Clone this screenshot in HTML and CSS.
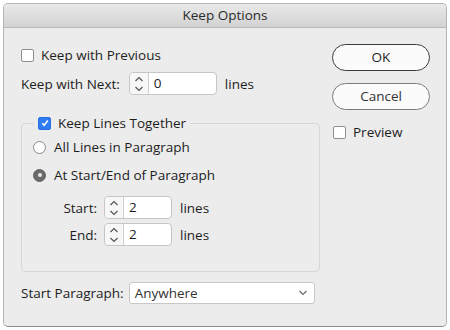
FILE: index.html
```html
<!DOCTYPE html>
<html lang="en">
<head>
    <title>Keep Options</title>
    <link rel="stylesheet" href="styles.css">
</head>
<body>
    <div class="dialog">
        <div class="titlebar">Keep Options</div>
        <div class="content">
            <div class="left">
                <label class="row first">
                    <span class="check"></span>
                    <span>Keep with Previous</span>
                </label>
                <div class="row next">
                    <span>Keep with Next:</span>
                    <span class="spinner wide">
                        <span class="arrows">
                            <svg width="10" height="18" viewBox="0 0 10 18"><path d="M1.5 6 L5 2.5 L8.5 6 M1.5 12 L5 15.5 L8.5 12" fill="none" stroke="#555" stroke-width="1.2"/></svg>
                        </span>
                        <span class="value">0</span>
                    </span>
                    <span class="unit">lines</span>
                </div>
                <fieldset class="group">
                    <legend>
                        <span class="check checked">
                            <svg width="10" height="10" viewBox="0 0 10 10"><path d="M2.2 5.2 L4.2 7.2 L7.8 2.6" fill="none" stroke="#fff" stroke-width="1.6"/></svg>
                        </span>
                        <span>Keep Lines Together</span>
                    </legend>
                    <div class="row radio-row">
                        <span class="radio"></span>
                        <span>All Lines in Paragraph</span>
                    </div>
                    <div class="row radio-row">
                        <span class="radio on"></span>
                        <span>At Start/End of Paragraph</span>
                    </div>
                    <div class="row field first-field">
                        <span class="field-label">Start:</span>
                        <span class="spinner">
                            <span class="arrows">
                                <svg width="10" height="18" viewBox="0 0 10 18"><path d="M1.5 6 L5 2.5 L8.5 6 M1.5 12 L5 15.5 L8.5 12" fill="none" stroke="#555" stroke-width="1.2"/></svg>
                            </span>
                            <span class="value">2</span>
                        </span>
                        <span class="unit">lines</span>
                    </div>
                    <div class="row field">
                        <span class="field-label">End:</span>
                        <span class="spinner">
                            <span class="arrows">
                                <svg width="10" height="18" viewBox="0 0 10 18"><path d="M1.5 6 L5 2.5 L8.5 6 M1.5 12 L5 15.5 L8.5 12" fill="none" stroke="#555" stroke-width="1.2"/></svg>
                            </span>
                            <span class="value">2</span>
                        </span>
                        <span class="unit">lines</span>
                    </div>
                </fieldset>
                <div class="row para">
                    <span>Start Paragraph:</span>
                    <span class="select">
                        <span>Anywhere</span>
                        <svg width="10" height="6" viewBox="0 0 10 6"><path d="M1.5 1 L5 4.5 L8.5 1" fill="none" stroke="#666" stroke-width="1.2"/></svg>
                    </span>
                </div>
            </div>
            <div class="right">
                <div class="button default">OK</div>
                <div class="button">Cancel</div>
                <label class="row preview">
                    <span class="check"></span>
                    <span>Preview</span>
                </label>
            </div>
        </div>
    </div>
</body>
</html>
```

FILE: styles.css
```css
* {
    box-sizing: border-box;
}
body {
    margin: 0px;
    background-color: #ffffff;
    font-family: "Open Sans", Arial, sans-serif;
    font-size: 13.5px;
    color: #1d1d1d;
}
.dialog {
    margin: 3px;
    width: 444px;
    height: 324px;
    background: #ececec;
    border: 1px solid #b4b4b4;
    border-bottom-color: #8c8c8c;
    border-radius: 5px;
    overflow: hidden;
}
.titlebar {
    height: 24px;
    line-height: 23px;
    text-align: center;
    color: #2b2b2b;
    background: linear-gradient(#e9e9e9, #d2d2d2);
    border-bottom: 1px solid #b9b9b9;
}
.content {
    display: flex;
}
.left {
    width: 317px;
    padding-left: 17px;
}
.row {
    display: flex;
    align-items: center;
}
.first {
    height: 20px;
    margin-top: 17px;
}
.next {
    height: 23px;
    margin-top: 7px;
}
.check {
    width: 13px;
    height: 13px;
    margin-right: 7px;
    background: #ffffff;
    border: 1px solid #8e8e8e;
    border-radius: 2px;
    display: flex;
    align-items: center;
    justify-content: center;
}
.check.checked {
    background: #2f7df6;
    border-color: #2a6fdc;
}
.spinner {
    display: flex;
    height: 23px;
    width: 68px;
    margin-left: 7px;
    background: #ffffff;
    border: 1px solid #c6c6c6;
    border-radius: 4px;
}
.spinner.wide {
    width: 88px;
    margin-left: 9px;
}
.arrows {
    width: 19px;
    display: flex;
    align-items: center;
    justify-content: center;
    background: #f7f7f7;
    border-right: 1px solid #cfcfcf;
    border-radius: 4px 0 0 4px;
}
.value {
    padding-left: 5px;
    line-height: 21px;
}
.unit {
    margin-left: 8px;
}
.group {
    margin: 19px 0 0 0;
    padding: 0 0 25px 10px;
    width: 299px;
    border: 1px solid #d7d7d7;
    border-radius: 4px;
}
.group legend {
    display: flex;
    align-items: center;
    height: 18px;
    margin-left: 2px;
    padding: 0 4px;
}
.radio-row {
    height: 20px;
    margin-top: 8px;
}
.radio-row:first-of-type {
    margin-top: 5px;
}
.radio {
    width: 13px;
    height: 13px;
    margin-left: 1px;
    margin-right: 8px;
    border-radius: 50%;
    background: #ffffff;
    border: 1px solid #8a8a8a;
    display: flex;
    align-items: center;
    justify-content: center;
}
.radio.on {
    background: #6b6b6b;
    border-color: #5e5e5e;
}
.radio.on::after {
    content: "";
    width: 4px;
    height: 4px;
    border-radius: 50%;
    background: #e8e8e8;
}
.field {
    height: 23px;
    margin-top: 4px;
}
.first-field {
    margin-top: 11px;
}
.field-label {
    width: 65px;
    text-align: right;
}
.para {
    height: 22px;
    margin-top: 10px;
}
.select {
    display: flex;
    align-items: center;
    justify-content: space-between;
    width: 186px;
    height: 22px;
    margin-left: 5px;
    padding: 0 6px 0 5px;
    background: #ffffff;
    border: 1px solid #c8c8c8;
    border-radius: 3px;
    color: #333333;
}
.right {
    display: flex;
    flex-direction: column;
    padding-left: 11px;
}
.button {
    width: 98px;
    height: 27px;
    margin-top: 16px;
    line-height: 24px;
    text-align: center;
    background: #fbfbfb;
    border: 1.5px solid #7b7b7b;
    border-radius: 14px;
    color: #333333;
}
.button.default {
    border-color: #3c3c3c;
    color: #1d1d1d;
}
.button + .button {
    margin-top: 12px;
}
.preview {
    height: 20px;
    margin-top: 12px;
    padding-left: 1px;
}
```
